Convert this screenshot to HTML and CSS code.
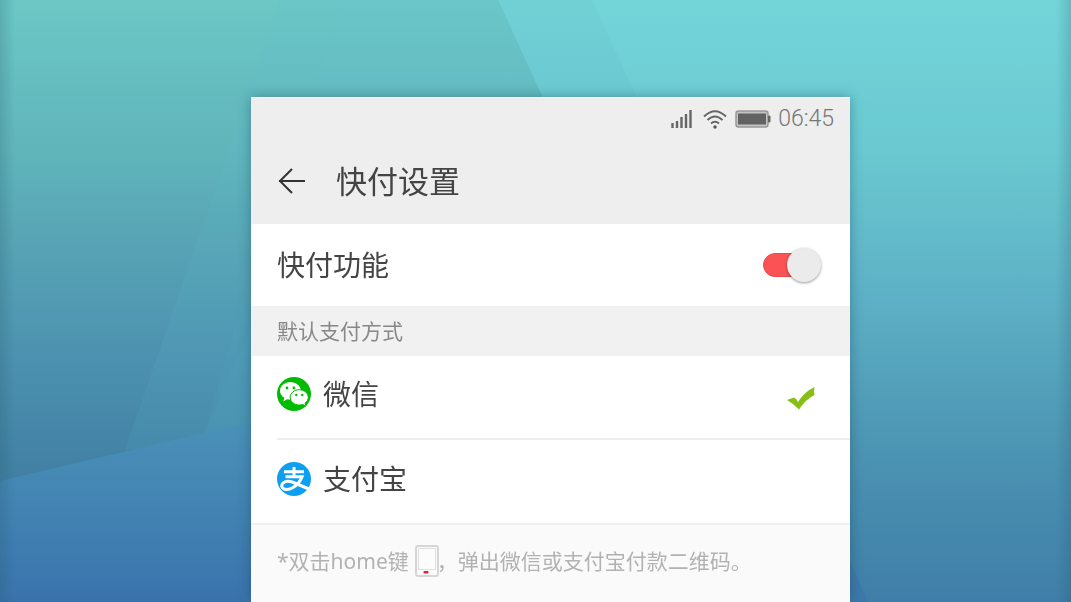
FILE: index.html
```html
<!DOCTYPE html>
<html lang="zh-CN">
  <head>
    <meta charset="utf-8" />
    <meta name="viewport" content="width=device-width, initial-scale=1" />
    <link rel="stylesheet" href="styles.css">

    <title>快付设置</title>
  </head>
  <body>
    <svg class="backdrop" viewBox="0 0 1071 602" preserveAspectRatio="none" aria-hidden="true">
      <defs>
        <linearGradient id="sky" x1="0" y1="0" x2="0" y2="1">
          <stop offset="0" stop-color="#74d5d9" />
          <stop offset="0.25" stop-color="#6ac9d1" />
          <stop offset="0.5" stop-color="#5db0c5" />
          <stop offset="0.75" stop-color="#4c94b3" />
          <stop offset="1" stop-color="#3f7ea8" />
        </linearGradient>
        <linearGradient id="slope" x1="0" y1="0" x2="0" y2="1">
          <stop offset="0" stop-color="#6cc7c5" />
          <stop offset="0.25" stop-color="#60b5bb" />
          <stop offset="0.4" stop-color="#58a4b5" />
          <stop offset="0.6" stop-color="#4c91af" />
          <stop offset="0.8" stop-color="#417fa3" />
          <stop offset="1" stop-color="#3a75ad" />
        </linearGradient>
        <linearGradient id="base" gradientUnits="userSpaceOnUse" x1="0" y1="430" x2="0" y2="602">
          <stop offset="0" stop-color="#4990b8" />
          <stop offset="1" stop-color="#3a73ac" />
        </linearGradient>
        <linearGradient id="edges" x1="0" y1="0" x2="1" y2="0">
          <stop offset="0" stop-color="#1d4f60" stop-opacity="0.2" />
          <stop offset="0.014" stop-color="#1d4f60" stop-opacity="0" />
          <stop offset="0.986" stop-color="#1d4f60" stop-opacity="0" />
          <stop offset="1" stop-color="#1d4f60" stop-opacity="0.2" />
        </linearGradient>
      </defs>
      <rect width="1071" height="602" fill="url(#sky)" />
      <path d="M0 0H498L775 602H0Z" fill="url(#slope)" />
      <path d="M280 0H498L680 400L125 450Z" fill="#5fc4dc" opacity="0.1" />
      <path d="M340 0H498L680 400L204 433L250 330Z" fill="#5fc4dc" opacity="0.06" />
      <path d="M498 0H592L637 98H543Z" fill="#5ab5bd" opacity="0.12" />
      <path d="M250 275L204 433L320 410V275Z" fill="#58b4cc" opacity="0.1" />
      <path d="M0 481L204 433L320 410V602H0Z" fill="url(#base)" />
      <path d="M840 540L868 602H840Z" fill="#3a73ac" opacity="0.5" />
      <rect width="1071" height="602" fill="url(#edges)" />
    </svg>

    <main class="screen">
      <header class="header">
        <div class="status">
          <svg width="22" height="18" viewBox="0 0 22 18" aria-hidden="true">
            <path d="M1.500 13V18M6 11V18M10.500 7V18M15 4V18M19.500 0V18" stroke="#666" stroke-width="2.400" />
          </svg>
          <svg class="wifi" width="24" height="19" viewBox="0 0 24 19" fill="none" stroke="#666" stroke-width="2" aria-hidden="true">
            <path d="M1 6.500Q12-4 23 6.500M4.500 10Q12 3 19.500 10M8 13.500Q12 10 16 13.500" />
            <circle cx="12" cy="17" r="1.700" fill="#555" stroke="none" />
          </svg>
          <svg class="battery" width="36" height="18" viewBox="0 0 36 18" aria-hidden="true">
            <rect x="1" y="1" width="32" height="16" rx="2.500" fill="#c4c4c4" stroke="#999" stroke-width="1.500" />
            <rect x="3" y="3.500" width="28" height="11" fill="#626262" />
            <path d="M33.500 6H35V12H33.500Z" fill="#666" stroke="#666" />
          </svg>
          <span class="time">06:45</span>
        </div>
        <div class="title-bar">
          <button class="back" type="button" aria-label="返回">
            <svg width="28" height="26" viewBox="0 0 28 26" fill="none" stroke="#333" stroke-width="2" aria-hidden="true">
              <path d="M14 1L2 13L14 25M1 13H27" />
            </svg>
          </button>
          <h1>快付设置</h1>
        </div>
      </header>

      <label class="row">
        <span>快付功能</span>
        <input class="switch" type="checkbox" checked />
      </label>

      <h2 class="section-title">默认支付方式</h2>

      <label class="row pay">
        <svg class="logo" viewBox="0 0 34 34" aria-hidden="true">
          <circle cx="17" cy="17" r="17" fill="#0b0" />
          <path d="M13.500 5C8 5 3 8.800 3 13.800C3 16.800 4.700 19.300 7.300 20.700L6.300 24.500L10.200 22.300Q13 23 15.500 22.500L24 13.500C23.500 8.500 18.500 5 13.500 5Z" fill="#fff" />
          <path d="M22.200 12.700C17.300 12.700 13.200 16.100 13.200 20.400C13.200 24.700 17.300 28 22.200 28C23.500 28 24.500 27.800 25.700 27.400L29 29.200L28 26C30.200 24.500 31.300 22.600 31.300 20.400C31.300 16.100 27.200 12.700 22.200 12.700Z" fill="#fff" stroke="#0b0" />
          <g fill="#0b0">
            <circle cx="10" cy="11" r="1.400" />
            <circle cx="17" cy="11" r="1.400" />
            <circle cx="19.300" cy="18" r="1.200" />
            <circle cx="25.300" cy="18" r="1.200" />
          </g>
        </svg>
        <span>微信</span>
        <input class="choice" type="radio" name="pay" value="wechat" checked />
        <svg class="tick" width="30" height="25" viewBox="0 0 30 25" aria-hidden="true">
          <path d="M1 14L8 11.500Q11 13 12 16Q18 6 28.500 1Q27.500 5 28.500 9Q20 13 13 23.500Q8 18 1 14Z" fill="#86c017" />
        </svg>
      </label>

      <label class="row pay">
        <svg class="logo" viewBox="0 0 34 34" aria-hidden="true">
          <circle cx="17" cy="17" r="17" fill="#0e9ff0" />
          <path d="M7 9.800H27M17 5V14.500M8.500 14.800H25Q22 22 16 25.500Q11 28.500 7 27Q3.500 25 5.500 21.500Q9 17.500 16.500 20.500L32 27" fill="none" stroke="#fff" stroke-width="3" />
        </svg>
        <span>支付宝</span>
        <input class="choice" type="radio" name="pay" value="alipay" />
        <svg class="tick" width="30" height="25" viewBox="0 0 30 25" aria-hidden="true">
          <path d="M1 14L8 11.500Q11 13 12 16Q18 6 28.500 1Q27.500 5 28.500 9Q20 13 13 23.500Q8 18 1 14Z" fill="#86c017" />
        </svg>
      </label>

      <p class="note">
        <span>*双击home键</span>
        <svg width="24" height="32" viewBox="0 0 24 32" aria-hidden="true">
          <rect x="1" y="1" width="22" height="30" rx="2" fill="#fafafa" stroke="#d6d6d6" stroke-width="2" />
          <path d="M3.500 3.500H20.500V24.500H3.500Z" fill="#fcfcfc" stroke="#dedede" />
          <rect x="8.500" y="26" width="5" height="2.500" rx="1" fill="#dc2040" />
        </svg>
        <span>，弹出微信或支付宝付款二维码。</span>
      </p>
    </main>
  </body>
</html>
```
FILE: styles.css
```css
*,
*::before,
*::after {
  box-sizing: border-box;
}

body {
  margin: 0;
  min-height: 100vh;
  display: flex;
  font-family: "Noto Sans", "Noto Sans CJK SC", sans-serif;
  color: #444;
}

.backdrop {
  position: fixed;
  top: 0;
  left: 0;
  width: 100%;
  height: 100%;
  z-index: -1;
}

.screen {
  flex: 1;
  display: flex;
  flex-direction: column;
  margin: 97px 221px 0 251px;
  background-color: #fff;
  box-shadow: 0 0 12px rgba(20, 60, 80, 0.4);
}

.header {
  padding: 8px 16px 16px 27px;
  background-color: #eee;
  border-top: 1px solid #fff;
}

.status {
  display: flex;
  align-items: center;
  justify-content: flex-end;
  height: 26px;
}

.wifi {
  margin-left: 10px;
}

.battery {
  margin: 0 7px 0 8px;
}

.time {
  font-family: Roboto, sans-serif;
  font-weight: 300;
  font-size: 23px;
  line-height: 26px;
  color: #777;
}

.title-bar {
  display: flex;
  align-items: center;
  gap: 30px;
  height: 76px;
  padding-top: 22px;
}

.back {
  display: flex;
  padding: 0;
  border: none;
  background: none;
}

h1,
h2 {
  margin: 0;
  font-weight: 400;
}

h1 {
  font-size: 31px;
  line-height: 40px;
}

.row {
  display: flex;
  align-items: center;
  justify-content: space-between;
  height: 82px;
  padding: 0 29px 0 26px;
  font-size: 28px;
  line-height: 40px;
}

.switch {
  position: relative;
  appearance: none;
  width: 58px;
  height: 34px;
  margin: 0;
}

/* track */
.switch::before {
  content: "";
  position: absolute;
  top: 5px;
  left: 0;
  width: 50px;
  height: 24px;
  border: 1px solid #ccc;
  border-radius: 12px;
  background-color: #ddd;
}

/* thumb */
.switch::after {
  content: "";
  position: absolute;
  top: 0;
  left: 0;
  width: 34px;
  height: 34px;
  border-radius: 50%;
  background-color: #ebebeb;
  box-shadow: 0 1px 3px rgba(0, 0, 0, 0.4);
}

.switch:checked::before {
  border-color: #ec484c;
  background-color: #fb5255;
}

.switch:checked::after {
  left: 24px;
}

.section-title {
  padding: 0 26px;
  background-color: #f1f1f1;
  font-size: 21px;
  line-height: 50px;
  color: #888;
}

.pay {
  justify-content: flex-start;
  gap: 12px;
  margin-left: 26px;
  padding: 0 34px 6px 0;
}

.pay + .pay {
  height: 85px;
  border-top: 2px solid #eee;
}

.logo {
  width: 34px;
  height: 34px;
}

.choice {
  appearance: none;
  width: 0;
  height: 0;
  margin: 0 0 0 auto;
}

.tick {
  visibility: hidden;
  margin-top: 8px;
}

.choice:checked + .tick {
  visibility: visible;
}

.note {
  flex: 1;
  display: flex;
  align-items: flex-start;
  margin: 0;
  padding: 20px 26px 0;
  border-top: 2px solid #f0f0f0;
  background-color: #fafafa;
  font-size: 21px;
  line-height: 32px;
  color: #b2b2b2;
}

.note svg {
  margin: 0 -2px 0 6px;
}
```
